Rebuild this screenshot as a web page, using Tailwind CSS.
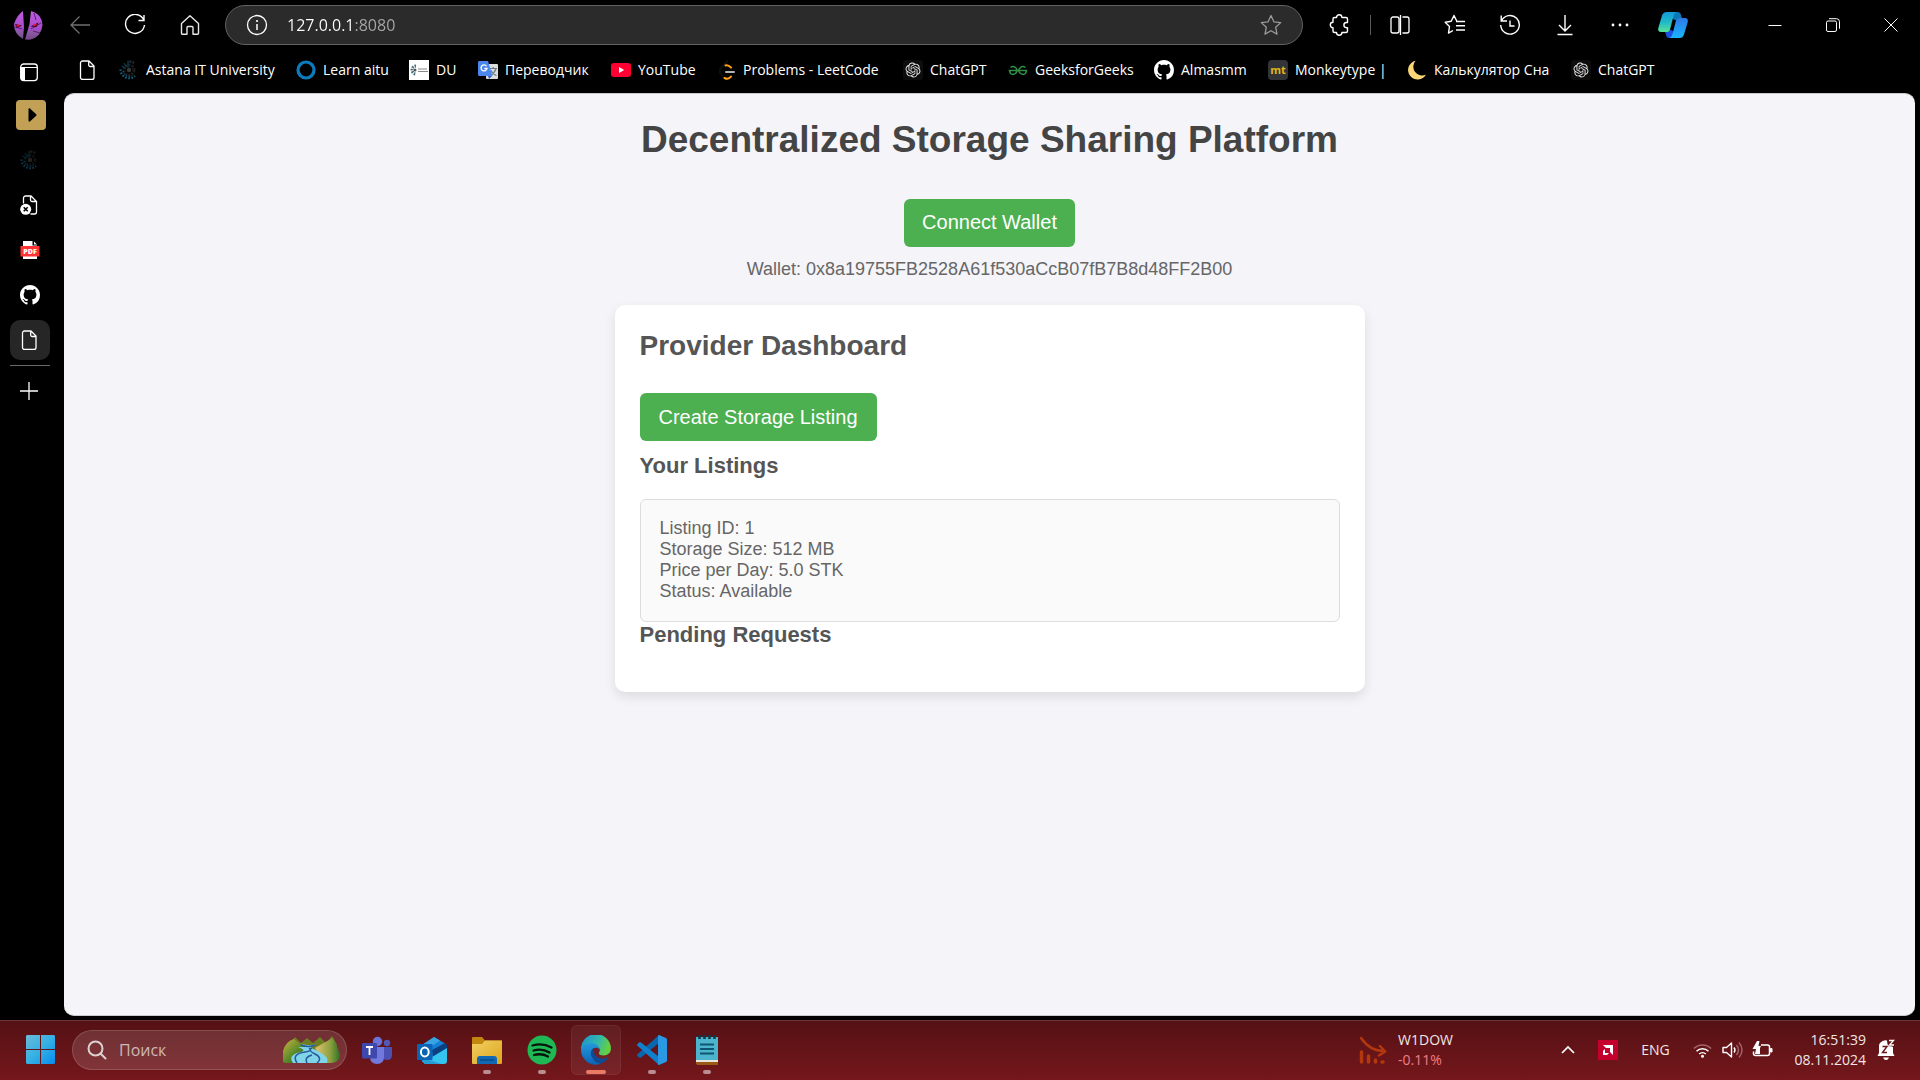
<!DOCTYPE html>
<html lang="en">
<head>
<meta charset="utf-8">
<title>Decentralized Storage Sharing Platform</title>
<script src="https://cdn.jsdelivr.net/npm/@tailwindcss/browser@4"></script>
</head>
<body class="flex h-screen flex-col overflow-hidden bg-black font-['Open_Sans','Noto_Sans',sans-serif] text-sm text-white">

<!-- Shared icons -->
<svg class="hidden" aria-hidden="true">
  <symbol id="page" viewBox="0 0 20 20"><path d="M4.5 1h6.5l5 5v11.5a2 2 0 0 1-2 2h-9.500a2 2 0 0 1-2-2v-14.500a2 2 0 0 1 2-2zM10.700 1v4a1.500 1.500 0 0 0 1.500 1.500h3.800" fill="none" stroke="#fff" stroke-width="1.300" stroke-linejoin="round"/></symbol>
  <symbol id="astana" viewBox="0 0 20 20">
    <g fill="none"><circle cx="10" cy="10" r="2.200" fill="#3b3b3b"/><circle cx="10" cy="10" r="5" stroke="#1d1d1d" stroke-width="3" stroke-dasharray="2 1.200" /><path d="M15 3A8.500 8.500 0 0 0 9 1.500" stroke="#2a2a2a" stroke-width="2.500" stroke-dasharray="2 1"/><path d="M9 .8v7M5 3l2 4M2.500 6l4 2" stroke="#0c4a66" stroke-width="1"/><path d="M1.500 9.500A8.500 8.500 0 0 0 10 18.300 8.500 8.500 0 0 0 16 16" stroke="#176b8f" stroke-width="2" stroke-dasharray="1.500 1.700"/><path d="M4 11a6 6 0 0 0 9 4.500" stroke="#12506c" stroke-width="1.600" stroke-dasharray="1.300 1.500"/></g>
  </symbol>
  <symbol id="github" viewBox="0 0 16 16"><path fill="#fff" d="M8 0C3.580 0 0 3.580 0 8c0 3.540 2.290 6.530 5.470 7.590.4.070.55-.17.55-.38 0-.19-.01-.82-.01-1.490-2.010.37-2.530-.49-2.690-.94-.09-.23-.48-.94-.82-1.130-.28-.15-.68-.52-.01-.53.63-.01 1.080.58 1.230.82.72 1.210 1.870.87 2.330.66.070-.52.28-.87.51-1.070-1.780-.2-3.640-.89-3.640-3.950 0-.87.31-1.590.82-2.150-.08-.2-.36-1.020.08-2.120 0 0 .67-.21 2.200.82.64-.18 1.320-.27 2-.27s1.360.09 2 .27c1.530-1.040 2.200-.82 2.200-.82.44 1.100.16 1.920.08 2.120.51.56.82 1.270.82 2.150 0 3.070-1.870 3.750-3.650 3.950.29.25.54.73.54 1.480 0 1.070-.01 1.930-.01 2.200 0 .21.15.46.55.38A8.010 8.010 0 0 0 16 8c0-4.420-3.580-8-8-8z"/></symbol>
  <symbol id="chatgpt" viewBox="0 0 32 32"><rect width="32" height="32" rx="5" fill="#0d0d0d"/><path transform="translate(4 4)" fill="#e8e8e8" d="M22.2819 9.8211a5.9847 5.9847 0 0 0-.5157-4.9108 6.0462 6.0462 0 0 0-6.5098-2.9A6.0651 6.0651 0 0 0 4.9807 4.1818a5.9847 5.9847 0 0 0-3.9977 2.9 6.0462 6.0462 0 0 0 .7427 7.0966 5.98 5.98 0 0 0 .511 4.9107 6.051 6.051 0 0 0 6.5146 2.9001A5.9847 5.9847 0 0 0 13.2599 24a6.0557 6.0557 0 0 0 5.7718-4.2058 5.9894 5.9894 0 0 0 3.9977-2.9001 6.0557 6.0557 0 0 0-.7475-7.0729zm-9.022 12.6081a4.4755 4.4755 0 0 1-2.8764-1.0408l.1419-.0804 4.7783-2.7582a.7948.7948 0 0 0 .3927-.6813v-6.7369l2.02 1.1686a.071.071 0 0 1 .038.052v5.5826a4.504 4.504 0 0 1-4.4945 4.4944zm-9.6607-4.1254a4.4708 4.4708 0 0 1-.5346-3.0137l.142.0852 4.783 2.7582a.7712.7712 0 0 0 .7806 0l5.8428-3.3685v2.3324a.0804.0804 0 0 1-.0332.0615L9.74 19.9502a4.4992 4.4992 0 0 1-6.1408-1.6464zM2.3408 7.8956a4.485 4.485 0 0 1 2.3655-1.9728V11.6a.7664.7664 0 0 0 .3879.6765l5.8144 3.3543-2.0201 1.1685a.0757.0757 0 0 1-.071 0l-4.8303-2.7865A4.504 4.504 0 0 1 2.3408 7.872zm16.5963 3.8558L13.1038 8.364 15.1192 7.2a.0757.0757 0 0 1 .071 0l4.8303 2.7913a4.4944 4.4944 0 0 1-.6765 8.1042v-5.6772a.79.79 0 0 0-.407-.667zm2.0107-3.0231l-.142-.0852-4.7735-2.7818a.7759.7759 0 0 0-.7854 0L9.409 9.2297V6.8974a.0662.0662 0 0 1 .0284-.0615l4.8303-2.7866a4.4992 4.4992 0 0 1 6.6802 4.66zM8.3065 12.863l-2.02-1.1638a.0804.0804 0 0 1-.038-.0567V6.0742a4.4992 4.4992 0 0 1 7.3757-3.4537l-.142.0805L8.704 5.459a.7948.7948 0 0 0-.3927.6813zm1.0976-2.3654l2.602-1.4998 2.6069 1.4998v2.9994l-2.5974 1.4997-2.6067-1.4997Z"/></symbol>
</svg>

<!-- Browser toolbar -->
<header class="flex h-[50px] shrink-0 items-center">
  <button class="flex w-[52px] justify-center pl-1" aria-label="Profile">
    <svg class="size-[30px]" viewBox="0 0 30 30"><defs><linearGradient id="pf" x2="0" y2="1"><stop offset="0" stop-color="#c05be0"/><stop offset=".65" stop-color="#a44bc9"/><stop offset=".72" stop-color="#8d5ba5"/><stop offset="1" stop-color="#75488c"/></linearGradient></defs><path d="M10 1Q4 5 1 14q0 10 9 15l1-12z" fill="url(#pf)"/><path d="M18 1q11 3 11.500 14Q28.500 27 17 29.700l-5-.2L16.500 14z" fill="url(#pf)"/><path d="M2 17l7 2M18 19l10-6M21 3l2 7M20 21l7 2" stroke="#5c1c78" fill="none"/><path d="M2 14l7 1.500-5 2.500zM17.500 16.500l8-4-2 4.500z" fill="#33000f"/><path d="M3.500 15.700h3M20.500 15.500l3-1.200" stroke="#f0144e" stroke-width="1.800"/></svg>
  </button>
  <button class="flex w-[55px] justify-center" aria-label="Back"><svg class="size-5" viewBox="0 0 20 20" fill="none" stroke="#6f6f6f" stroke-width="1.300"><path d="M9.500 1.500L1 10l8.500 8.500M1 10h19"/></svg></button>
  <button class="flex w-[55px] justify-center" aria-label="Refresh"><svg class="size-[22px]" viewBox="0 0 22 22" fill="none" stroke="#fff" stroke-width="1.400"><path d="M19.500 5.500A9.500 9.500 0 1 0 20.500 11M20 1v5.500h-5.500"/></svg></button>
  <button class="flex w-[55px] justify-center" aria-label="Home"><svg class="size-[22px]" viewBox="0 0 22 22" fill="none" stroke="#e8e8e8" stroke-width="1.400" stroke-linejoin="round"><path d="M2.500 9.500L11 1.800l8.500 7.700v9.700a1 1 0 0 1-1 1H14V13.500a1 1 0 0 0-1-1H9a1 1 0 0 0-1 1v6.700H3.500a1 1 0 0 1-1-1z"/></svg></button>
  <div class="ml-2 flex h-10 flex-1 items-center rounded-full border border-[#626262] bg-[#2b2b2b] px-5">
    <svg class="size-[22px]" viewBox="0 0 22 22"><circle cx="11" cy="11" r="9.500" fill="none" stroke="#fff" stroke-width="1.300"/><path d="M11 10v6" stroke="#fff" stroke-width="1.500"/><circle cx="11" cy="7" r="1.100" fill="#fff"/></svg>
    <input class="ml-[19px] min-w-0 flex-1 bg-[linear-gradient(90deg,#fff_68px,#a8a8a8_68px)] bg-clip-text text-base text-white outline-none [-webkit-text-fill-color:transparent]" aria-label="Address" value="127.0.0.1:8080">
    <button aria-label="Add to favourites"><svg class="size-[22px]" viewBox="0 0 22 22" fill="none" stroke="#9a9a9a" stroke-width="1.300" stroke-linejoin="round"><path d="M11 1.500l2.900 6.300 6.800.8-5 4.700 1.300 6.800-6-3.400-6 3.400 1.300-6.800-5-4.700 6.800-.8z"/></svg></button>
  </div>
  <button class="ml-[9px] flex w-[55px] justify-center" aria-label="Extensions"><svg class="size-[22px]" viewBox="0 0 22 22" fill="none" stroke="#fff" stroke-width="1.400" stroke-linejoin="round"><path d="M7.500 3.500a2.700 2.700 0 0 1 5.400 0H17a1.500 1.500 0 0 1 1.500 1.500v3.500h-1a2.600 2.600 0 0 0 0 5.200h1V17a1.500 1.500 0 0 1-1.500 1.500h-4.100a2.700 2.700 0 0 1-5.400 0H5.500A1.500 1.500 0 0 1 4 17v-3.300a2.700 2.700 0 0 1 0-5.400V5a1.500 1.500 0 0 1 1.500-1.500z"/></svg></button>
  <span class="mr-px ml-[3px] h-5 w-px bg-[#5a5a5a]"></span>
  <button class="flex w-[55px] justify-center" aria-label="Split screen"><svg class="size-[22px]" viewBox="0 0 22 22" fill="none" stroke="#fff" stroke-width="1.300"><path d="M8 3H4a2 2 0 0 0-2 2v12a2 2 0 0 0 2 2h4a2 2 0 0 0 2-2V5a2 2 0 0 0-2-2zM13.500 3H18a2 2 0 0 1 2 2v12a2 2 0 0 1-2 2h-4.500M11.500 1v20"/></svg></button>
  <button class="flex w-[55px] justify-center" aria-label="Favourites"><svg class="size-[22px]" viewBox="0 0 22 22" fill="none" stroke="#fff" stroke-width="1.400" stroke-linejoin="round"><path d="M13 7.500L10 1.500 7.200 7.300l-6 .9 4.300 4.300-1 6.600L9 16.500M12 7.500h9M12 11.700h9M12 16h9"/></svg></button>
  <button class="flex w-[55px] justify-center" aria-label="History"><svg class="size-[22px]" viewBox="0 0 22 22" fill="none" stroke="#fff" stroke-width="1.400"><path d="M2.500 7a9.300 9.300 0 1 1-.8 4M2.200 1.500V7H8M11 6.500v5.500h4.500"/></svg></button>
  <button class="flex w-[55px] justify-center" aria-label="Downloads"><svg class="size-[22px]" viewBox="0 0 22 22" fill="none" stroke="#fff" stroke-width="1.400"><path d="M11 1v16M5 11l6 6 6-6M3.500 20.500h15"/></svg></button>
  <button class="flex w-[55px] justify-center" aria-label="Settings and more"><svg class="size-[22px]" viewBox="0 0 22 22" fill="#fff"><circle cx="4" cy="11" r="1.400"/><circle cx="11" cy="11" r="1.400"/><circle cx="18" cy="11" r="1.400"/></svg></button>
  <button class="flex w-[55px] justify-center pr-1" aria-label="Copilot"><svg class="h-[26px] w-[30px]" viewBox="0 0 30 26"><defs><linearGradient id="c1" x2="0" y2="1"><stop offset="0" stop-color="#129ad8"/><stop offset=".5" stop-color="#1fb8c9"/><stop offset="1" stop-color="#58e39a"/></linearGradient><linearGradient id="c2" x2="0" y2="1"><stop offset="0" stop-color="#2f78e6"/><stop offset="1" stop-color="#19b6fb"/></linearGradient></defs><path d="M15 0h4.500q2.500 0 3.200 2l1.300 4.500h-3q-2 0-2.700 2L15 7z" fill="#0a78b8"/><path d="M15 26h-4q-2 0-2.700-2L7 19.500h2q2 0 2.700-2L15 19z" fill="#1b4fe0"/><path d="M8.500 0H19q-2.500.5-3.500 4L12 17.500Q11.300 20 9 20H3Q-.5 20 .3 16L4 3.500Q5.200 0 8.500 0z" fill="url(#c1)"/><path d="M21.500 26H11q2.500-.5 3.500-4L18 8.500Q18.700 6 21 6h6q3.500 0 2.700 4L26 22.500Q24.800 26 21.500 26z" fill="url(#c2)"/></svg></button>
  <div class="ml-11 flex">
    <button class="flex w-[58px] justify-center" aria-label="Minimize"><svg class="size-3.5" viewBox="0 0 14 14" stroke="#fff"><path d="M.5 7.500h13"/></svg></button>
    <button class="flex w-[58px] justify-center" aria-label="Restore"><svg class="size-3.5" viewBox="0 0 14 14" stroke="#fff" fill="none"><rect x=".5" y="3" width="10" height="10.500" rx="1.500"/><path d="M3 .7h7.500a3 3 0 0 1 3 3v7"/></svg></button>
    <button class="flex w-[58px] justify-center" aria-label="Close"><svg class="size-3.5" viewBox="0 0 14 14" stroke="#fff"><path d="M.5.5l13 13M13.500.5l-13 13"/></svg></button>
  </div>
</header>

<div class="flex min-h-0 flex-1">
  <!-- Vertical tabs -->
  <aside class="flex w-16 shrink-0 flex-col items-start">
    <button class="flex h-[42px] w-[58px] items-center justify-center pt-px" aria-label="Tab menu"><svg class="size-5" viewBox="0 0 20 20"><rect x="1.700" y="2" width="16.600" height="16.600" rx="3" fill="none" stroke="#fff" stroke-width="1.300"/><path d="M2 5.500h16M2 5.500h3.500V18.500H4a2 2 0 0 1-2-2z" fill="#fff" stroke="#fff"/></svg></button>
    <button class="flex h-[45px] w-[62px] items-center justify-center" aria-label="Tab 1"><svg class="size-[30px]" viewBox="0 0 30 30"><rect width="30" height="30" rx="4" fill="#c2a157"/><path d="M12.500 9.200c0-1 1-1.200 1.700-.5l6 5.500q.8.800 0 1.600l-6 5.500c-.7.700-1.700.5-1.700-.5z" fill="#000"/></svg></button>
    <button class="flex h-[45px] w-[60px] items-center justify-center opacity-60" aria-label="Astana IT University tab"><svg class="size-5"><use href="#astana"/></svg></button>
    <button class="flex h-[45px] w-[60px] items-center justify-center" aria-label="Unavailable page tab"><svg class="size-5" viewBox="0 0 20 20"><path d="M3.500 8.500V3a2 2 0 0 1 2-2h5.500l5.500 5.500V17a2 2 0 0 1-2 2H10.500M10.500 1v4a1.500 1.500 0 0 0 1.500 1.500h4" fill="none" stroke="#fff" stroke-width="1.300"/><circle cx="5.700" cy="14.300" r="5.500" fill="#fff"/><path d="M3.700 12.300l4 4M7.700 12.300l-4 4" stroke="#000" stroke-width="1.600"/></svg></button>
    <button class="flex h-[45px] w-[60px] items-center justify-center" aria-label="PDF tab"><svg class="size-5" viewBox="0 0 20 20"><path d="M3 1h10l4 4v14H3z" fill="#fff"/><path d="M12.500 0v5.500H18z" fill="#000"/><path d="M14 1.500l3 3h-3z" fill="#fff"/><rect x=".5" y="6" width="19" height="10.500" fill="#f33"/><text x="10" y="14" text-anchor="middle" class="font-[Open_Sans] text-[7px] font-extrabold" fill="#fff">PDF</text></svg></button>
    <button class="flex h-[45px] w-[60px] items-center justify-center" aria-label="GitHub tab"><svg class="size-5"><use href="#github"/></svg></button>
    <button class="mt-[3px] ml-[10px] flex size-10 items-center justify-center rounded-[10px] bg-[#262626]" aria-label="Current tab"><svg class="size-5"><use href="#page"/></svg></button>
    <span class="mt-[5px] ml-[10px] h-px w-10 bg-[#6a6a6a]"></span>
    <button class="mt-4 flex w-[58px] justify-center" aria-label="New tab"><svg class="size-[18px]" viewBox="0 0 18 18" stroke="#fff" stroke-width="1.300"><path d="M9 0v18M0 9h18"/></svg></button>
  </aside>

  <div class="flex min-w-0 flex-1 flex-col pr-[5px] pb-1">
    <!-- Bookmarks -->
    <nav class="flex h-[43px] shrink-0 items-center pb-[3px] pl-[14px] whitespace-nowrap" aria-label="Bookmarks">
      <a href="#" class="w-[41px]" aria-label="Blank page"><svg class="size-5"><use href="#page"/></svg></a>
      <a href="#" class="flex w-[177px] items-center gap-[7px]"><svg class="size-5 shrink-0"><use href="#astana"/></svg>Astana IT University</a>
      <a href="#" class="flex w-[113px] items-center gap-[7px]"><svg class="size-5 shrink-0" viewBox="0 0 20 20"><circle cx="10" cy="10" r="8" fill="none" stroke="#0b7dbf" stroke-width="3.200"/></svg>Learn aitu</a>
      <a href="#" class="flex w-[69px] items-center gap-[7px]"><svg class="size-5 shrink-0" viewBox="0 0 20 20"><path fill="#fff" d="M0 0h20v20H0z"/><path d="M7 6A4 4 0 1 0 7 14" fill="none" stroke="#4b6f80" stroke-width="3" stroke-dasharray="1.500 1"/><circle cx="6" cy="10" r="1.500" fill="#555"/><path d="M9 9h9M9 11.500h10" stroke="#888"/></svg>DU</a>
      <a href="#" class="flex w-[133px] items-center gap-[7px]"><svg class="size-5 shrink-0" viewBox="0 0 20 20"><rect x="8" y="4" width="12" height="15" rx="1" fill="#dcdcdc"/><path d="M12 8.500h7M15.300 7v1.500M13 15q4-2.500 5-6.500M13 10.500q2 4 5.500 5" fill="none" stroke="#6b7c86" stroke-width="1.200"/><path d="M10 16h4l-3 3z" fill="#2f5fc4"/><path d="M1 1h9l4.500 15H1.500A1.500 1.500 0 0 1 0 14.500V2.500A1.500 1.500 0 0 1 1 1z" fill="#4a86ee"/><path d="M8.500 6.200A3 3 0 1 0 9 8.500H6.300" fill="none" stroke="#fff" stroke-width="1.300"/></svg>Переводчик</a>
      <a href="#" class="flex w-[107px] items-center gap-[7px]"><svg class="size-5 shrink-0" viewBox="0 0 20 20"><rect y="3" width="20" height="14" rx="3" fill="#ff0033"/><path d="M8 7v6l5.200-3z" fill="#fff"/></svg>YouTube</a>
      <a href="#" class="flex w-[185px] items-center gap-[5px]"><svg class="size-5 shrink-0" viewBox="0 0 20 20" fill="none" stroke-width="2" stroke-linecap="round"><path d="M9.500 1L2 9v4l4 5" stroke="#0e0e0e"/><path d="M7.500 5.500q2.500-1 5.500 2M6.500 18q4 2 6.500-1.500" stroke="#ffa116"/><path d="M8 12h8" stroke="#b3b3b3"/></svg>Problems - LeetCode</a>
      <a href="#" class="flex w-[105px] items-center gap-[7px]"><svg class="size-5 shrink-0"><use href="#chatgpt"/></svg>ChatGPT</a>
      <a href="#" class="flex w-[146px] items-center gap-[7px]"><svg class="size-5 shrink-0" viewBox="0 0 20 20" fill="none" stroke="#2f8d46" stroke-width="1.600"><path d="M2.500 7.500Q5 5.500 7.500 7.500T8 13Q5 15.500 2.500 13.500L1.500 10.500H18.500L17.500 13.500Q15 15.500 12 13T12.500 7.500Q15 5.500 17.500 7.500"/></svg>GeeksforGeeks</a>
      <a href="#" class="flex w-[114px] items-center gap-[7px]"><svg class="size-5 shrink-0"><use href="#github"/></svg>Almasmm</a>
      <a href="#" class="flex w-[139px] items-center gap-[7px]"><svg class="size-5 shrink-0" viewBox="0 0 20 20"><rect width="20" height="20" rx="4" fill="#323437"/><text x="10" y="14" text-anchor="middle" class="font-[Open_Sans] text-[11px] font-bold" fill="#e2b714">mt</text></svg>Monkeytype |</a>
      <a href="#" class="flex w-[164px] items-center gap-[7px]"><svg class="size-5 shrink-0" viewBox="0 0 20 20"><path d="M8.500.8A9.500 9.500 0 1 0 19 14.500 8.800 8.800 0 0 1 8.500.8z" fill="#fbd777"/></svg>Калькулятор Сна</a>
      <a href="#" class="flex items-center gap-[7px]"><svg class="size-5 shrink-0"><use href="#chatgpt"/></svg>ChatGPT</a>
    </nav>

    <!-- Page -->
    <main class="min-h-0 flex-1 overflow-hidden rounded-[10px] border-y border-[#c9c9ce] bg-[#f4f4f9] pt-6 font-['Liberation_Sans',Arial,sans-serif] text-lg leading-[21px] text-[#666]">
      <div class="flex flex-col items-center">
        <h1 class="text-[37px] leading-[43px] font-bold text-[#444]">Decentralized Storage Sharing Platform</h1>
        <button class="mt-[38px] h-12 rounded-md bg-[#4caf50] px-[18px] pb-[2px] text-xl text-white">Connect Wallet</button>
        <p class="mt-3">Wallet: 0x8a19755FB2528A61f530aCcB07fB7B8d48FF2B00</p>
        <section class="mt-[25px] w-full max-w-[750px] rounded-[10px] bg-white p-[25px] shadow-[0_5px_12px_rgba(0,0,0,0.1)]">
          <h2 class="text-[28px] leading-8 font-bold text-[#555]">Provider Dashboard</h2>
          <button class="mt-[31px] block h-12 rounded-md bg-[#4caf50] px-[19px] text-xl text-white">Create Storage Listing</button>
          <h3 class="mt-3 text-[22px] leading-[25px] font-bold text-[#555]">Your Listings</h3>
          <div class="mt-[21px] rounded-md border border-[#ddd] bg-[#fafafa] px-[19px] pt-[18px] pb-[19px]">
            <p>Listing ID: 1</p>
            <p>Storage Size: 512 MB</p>
            <p>Price per Day: 5.0 STK</p>
            <p>Status: Available</p>
          </div>
          <h3 class="mb-5 text-[22px] leading-[25px] font-bold text-[#555]">Pending Requests</h3>
        </section>
      </div>
    </main>
  </div>
</div>

<!-- Taskbar -->
<footer class="flex h-[60px] shrink-0 items-center border-t border-[#6a3538] bg-linear-to-b from-[#561114] to-[#74171c] pr-[25px] pb-[2px] pl-[26px] text-[#f0e6e6]">
  <button aria-label="Start"><svg class="size-[29px]" viewBox="0 0 29 29"><defs><linearGradient id="wn" x1="0" y1="0" x2="1" y2="1" ><stop offset="0" stop-color="#6cbbd6"/><stop offset=".5" stop-color="#35b1e4"/><stop offset="1" stop-color="#078bf0"/></linearGradient></defs><path fill="url(#wn)" d="M1 0h13v14H0V1zM15 0h13l1 1v13H15zM0 15h14v14H1l-1-1zM15 15h14v13l-1 1H15z"/></svg></button>
  <label class="ml-[17px] flex h-10 w-[275px] items-center rounded-full border border-white/15 bg-white/13 pr-[6px] pl-[14px]">
    <svg class="size-5 shrink-0" viewBox="0 0 20 20" fill="none" stroke="#ddd0d0" stroke-width="2"><circle cx="8.500" cy="8.500" r="7"/><path d="M13.500 13.500l5 5" stroke-linecap="round"/></svg>
    <input class="ml-3 w-0 min-w-0 flex-1 text-base text-white outline-none placeholder:text-[#cdb8b8]" placeholder="Поиск" aria-label="Поиск">
    <svg class="h-[27px] w-[57px] shrink-0" viewBox="0 0 57 27"><defs><linearGradient id="hl" x2="1" y2="1"><stop offset="0" stop-color="#d1b13e"/><stop offset=".5" stop-color="#5f8d2c"/><stop offset="1" stop-color="#1e5b22"/></linearGradient><linearGradient id="hr" x2="1"><stop offset="0" stop-color="#dfc270"/><stop offset=".6" stop-color="#8fa03f"/><stop offset="1" stop-color="#2d7226"/></linearGradient></defs><path d="M6 8l6-7 6 6 6-5 6 5 7-6 6 6 6-7 5 9v8H6z" fill="#6f7d22"/><path d="M0 26V15Q3 5 11 3q6 6 13 8l-8 8-5 8H4q-3 0-4-1z" fill="url(#hl)"/><path d="M32 12Q42 6 50 2q5 10 7 17 0 7-9 8h-6z" fill="url(#hr)"/><path d="M17 7q9 4 15 1l-4 4q6 2 10 5 8 4 6 10H10q-6-8 8-11 6-2-3-5h9z" fill="#7fd4e8"/><path d="M14 27q-6-9 8-11 8-1 4-4M24 27q-3-6 5-8M34 27q6-5-2-9t-3-6M18 9q8 3 14 0" stroke="#285a9c" stroke-width="1.500" fill="none"/></svg>
  </label>
  <div class="ml-[2px] flex">
    <button class="flex h-[50px] w-[55px] flex-col items-center pt-[10px]" aria-label="Teams"><svg class="h-[30px] w-[30px]" viewBox="0 0 30 30"><circle cx="15.500" cy="6.500" r="4.700" fill="#6b72d8"/><circle cx="25" cy="8" r="3.200" fill="#5058b8"/><path d="M21 12h9v8q0 5-5 5-4 0-5-4z" fill="#4a50b4"/><path d="M8 12h14v10q0 7-7 7t-7-7z" fill="#7279dc"/><rect y="8" width="15" height="15.500" rx="1" fill="#3f48ac"/><path d="M4 12h7M7.500 12v8" stroke="#fff" stroke-width="1.800"/></svg></button>
    <button class="flex h-[50px] w-[55px] flex-col items-center pt-[10px]" aria-label="Outlook"><svg class="h-[30px] w-[30px]" viewBox="0 0 30 30"><path d="M5 10L17 2l12 7v14L5 27z" fill="#1581d5"/><path d="M5 10L17 2l6 3.500L12 13z" fill="#39a4e5"/><path d="M15 15l13-7 2 2v4L16 23z" fill="#0b3f80"/><path d="M30 13v13q0 3-3 3H8L5 26l10-4z" fill="#35c4ee"/><path d="M10 24l14 5H8l-3-3z" fill="#249dd9"/><rect y="9" width="15.500" height="16" rx="1" fill="#0b63b3"/><ellipse cx="7.800" cy="17" rx="3.900" ry="4.500" fill="none" stroke="#fff" stroke-width="2"/></svg></button>
    <button class="flex h-[50px] w-[55px] flex-col items-center pt-[10px]" aria-label="File Explorer"><svg class="h-[30px] w-[30px]" viewBox="0 0 30 30"><defs><linearGradient id="fd" x2="1" y2="1"><stop stop-color="#f0cf63"/><stop offset="1" stop-color="#dfa51b"/></linearGradient></defs><path d="M0 3q0-1 1-1h9l3 3.500h17V10H0z" fill="#c2870f"/><path d="M0 9h10l3-3.500h16q1 0 1 1V28q0 1-1 1H1q-1 0-1-1z" fill="url(#fd)"/><path d="M5 29v-5q0-3 3-3h14q3 0 3 3v5z" fill="#1169b5"/><path d="M8 25h14" stroke="#083d70"/></svg><span class="mt-[5px] h-1 w-2 rounded-full bg-[#b98e90]"></span></button>
    <button class="flex h-[50px] w-[55px] flex-col items-center pt-[10px]" aria-label="Spotify"><svg class="h-[30px] w-[30px]" viewBox="0 0 30 30"><circle cx="15" cy="15" r="14.500" fill="#1eb955"/><path d="M5.500 10.500q10-3 19 2M6.500 15.500q8.500-2.500 16 2M7 20q7.500-2 14 1.500" fill="none" stroke="#07150b" stroke-width="2.300" stroke-linecap="round"/></svg><span class="mt-[5px] h-1 w-2 rounded-full bg-[#b98e90]"></span></button>
    <button class="mr-[3px] ml-[2px] flex h-[50px] w-[50px] flex-col items-center rounded-md border border-white/5 bg-white/6 pt-[9px]" aria-label="Microsoft Edge"><svg class="h-[30px] w-[30px]" viewBox="0 0 30 30"><defs><linearGradient id="e1" x2="1" y2=".3"><stop stop-color="#1c91ce"/><stop offset=".6" stop-color="#31b7ad"/><stop offset="1" stop-color="#64cf43"/></linearGradient><linearGradient id="e2" x2="0" y2="1"><stop stop-color="#2599dc"/><stop offset="1" stop-color="#0b62b6"/></linearGradient></defs><path d="M0 15A15 15 0 0 1 30 13q0 7-7 7.500-6 0-5-3 2-3-1-6Q8 5 0 15z" fill="url(#e1)"/><path d="M0 15Q3 7.500 11 8q7 1 7 6-2-2-5-1-5 3-2 9 3 6 9 6.500Q12 32 5 26 0 21 0 15z" fill="url(#e2)"/><path d="M13 13q-5 3-2 9 3 6 9 6.500 5-2 7.500-6.500-5 3-10 1-6-3-4.500-10z" fill="#0a4c99"/></svg><span class="mt-[5px] h-1 w-5 rounded-full bg-[#ea7b62]"></span></button>
    <button class="flex h-[50px] w-[55px] flex-col items-center pt-[10px]" aria-label="Visual Studio Code"><svg class="h-[30px] w-[30px]" viewBox="0 0 30 30"><path d="M22 0v8L4 22.500q-1 .7-2 0L.5 21q-.8-1 0-1.800z" fill="#0a66ad"/><path d="M22 30v-8L4 7.500q-1-.7-2 0L.5 9q-.8 1 0 1.800z" fill="#1180cc"/><path d="M22 0l7 3q1 .5 1 1.500v21q0 1-1 1.500l-7 3q-1.500 0-1-1.500V1.500Q20.800 0 22 0z" fill="#2a98e2"/></svg><span class="mt-[5px] h-1 w-2 rounded-full bg-[#b98e90]"></span></button>
    <button class="flex h-[50px] w-[55px] flex-col items-center pt-[10px]" aria-label="Notepad"><svg class="h-[30px] w-[30px]" viewBox="0 0 30 30"><path d="M4 25h22v5H6q-2 0-2-2z" fill="#9a5a16"/><path d="M4 2h22v25H4z" fill="#e8e4de"/><path d="M4 2h22v23H4z" fill="#4cb4cd"/><path d="M8 9.500h14M8 14h14M8 18.500h14" stroke="#0d5570" stroke-width="2"/><path d="M7.500 0v4M12.500 0v4M17.500 0v4M22.500 0v4" stroke="#0c3b4d" stroke-width="2.600"/></svg><span class="mt-[5px] h-1 w-2 rounded-full bg-[#b98e90]"></span></button>
  </div>

  <button class="ml-auto flex items-center gap-[11px] text-left leading-5">
    <svg class="size-[28px]" viewBox="0 0 28 28" fill="none" stroke="#b3380d" stroke-linecap="round"><path d="M2 2q9 13 23 13M21 10l5 5.500-6 4" stroke-width="2.500"/><path d="M2.500 16v10M9.500 20v6M16.500 24v2M23 26h1" stroke-width="3.500"/></svg>
    <span>W1DOW<br><span class="text-[#ee7f88]">-0.11%</span></span>
  </button>
  <button class="ml-[108px]" aria-label="Show hidden icons"><svg class="size-3.5" viewBox="0 0 14 14" fill="none" stroke="#fff" stroke-width="1.700"><path d="M1 10l6-6 6 6"/></svg></button>
  <button class="ml-[23px]" aria-label="AMD Software"><svg class="size-5" viewBox="0 0 20 20"><path fill="#c4002c" d="M0 0h20v20H0z"/><path d="M5 5h10v10l-3-3V8H8z" fill="#fff"/><path d="M5 15v-4l2-2v4h4l-2 2z" fill="#fff"/></svg></button>
  <button class="ml-[23px] w-[29px]">ENG</button>
  <button class="ml-[23px] flex items-center" aria-label="Network, sound and battery">
    <svg class="h-[18px] w-[19px]" viewBox="0 0 19 18" fill="none" stroke="#fff" stroke-width="1.500"><path d="M.8 7.500a12.300 12.300 0 0 1 17.400 0" stroke="#a56568"/><path d="M3.500 10.300a8.500 8.500 0 0 1 12 0M6.200 13a4.700 4.700 0 0 1 6.600 0"/><circle cx="9.500" cy="15.300" r="1.500" fill="#fff" stroke="none"/></svg>
    <svg class="ml-[10px] h-[18px] w-[21px]" viewBox="0 0 21 18" fill="none" stroke="#fff" stroke-width="1.400"><path d="M1 6.500h3.500L9.500 2v14l-5-4.500H1z" stroke-linejoin="round"/><path d="M12 6.500q2 2.500 0 5"/><path d="M14.500 4q4 5 0 10M17 1.500q6 7.500 0 15" stroke="#a56568"/></svg>
    <svg class="ml-[9px] h-[18px] w-[21px]" viewBox="0 0 21 18"><path d="M9 4h6.500a2 2 0 0 1 2 2v6.500a2 2 0 0 1-2 2h-12a2 2 0 0 1-2-2v-2" fill="none" stroke="#fff" stroke-width="1.500"/><path d="M18.500 7.500h1.500v3.500h-1.500z" fill="#fff" stroke="#fff"/><path d="M5 0L.5 8H4l-1 5h5V7l1-2H6.500L7.500 0z" fill="#fff"/></svg>
  </button>
  <button class="ml-5 w-[73px] text-right leading-5">16:51:39<br>08.11.2024</button>
  <button class="ml-[11px]" aria-label="Notifications"><svg class="h-[22px] w-[18px]" viewBox="0 0 18 22"><path d="M3 4q3-3.500 7-2.500l.5 4L16 8v6l1.500 3H.5L2 14V7q0-2 1-3zM6 18.500h6q-1 2.500-3 2.500t-3-2.500z" fill="#fff"/><path d="M5.500 7.500H10l-4.500 6H10M11.500 6.500h3" fill="none" stroke="#6b1518" stroke-width="1.400"/><path d="M12 1.500h4.500l-4 4.500H17" fill="none" stroke="#fff" stroke-width="1.300"/></svg></button>
</footer>
</body>
</html>
